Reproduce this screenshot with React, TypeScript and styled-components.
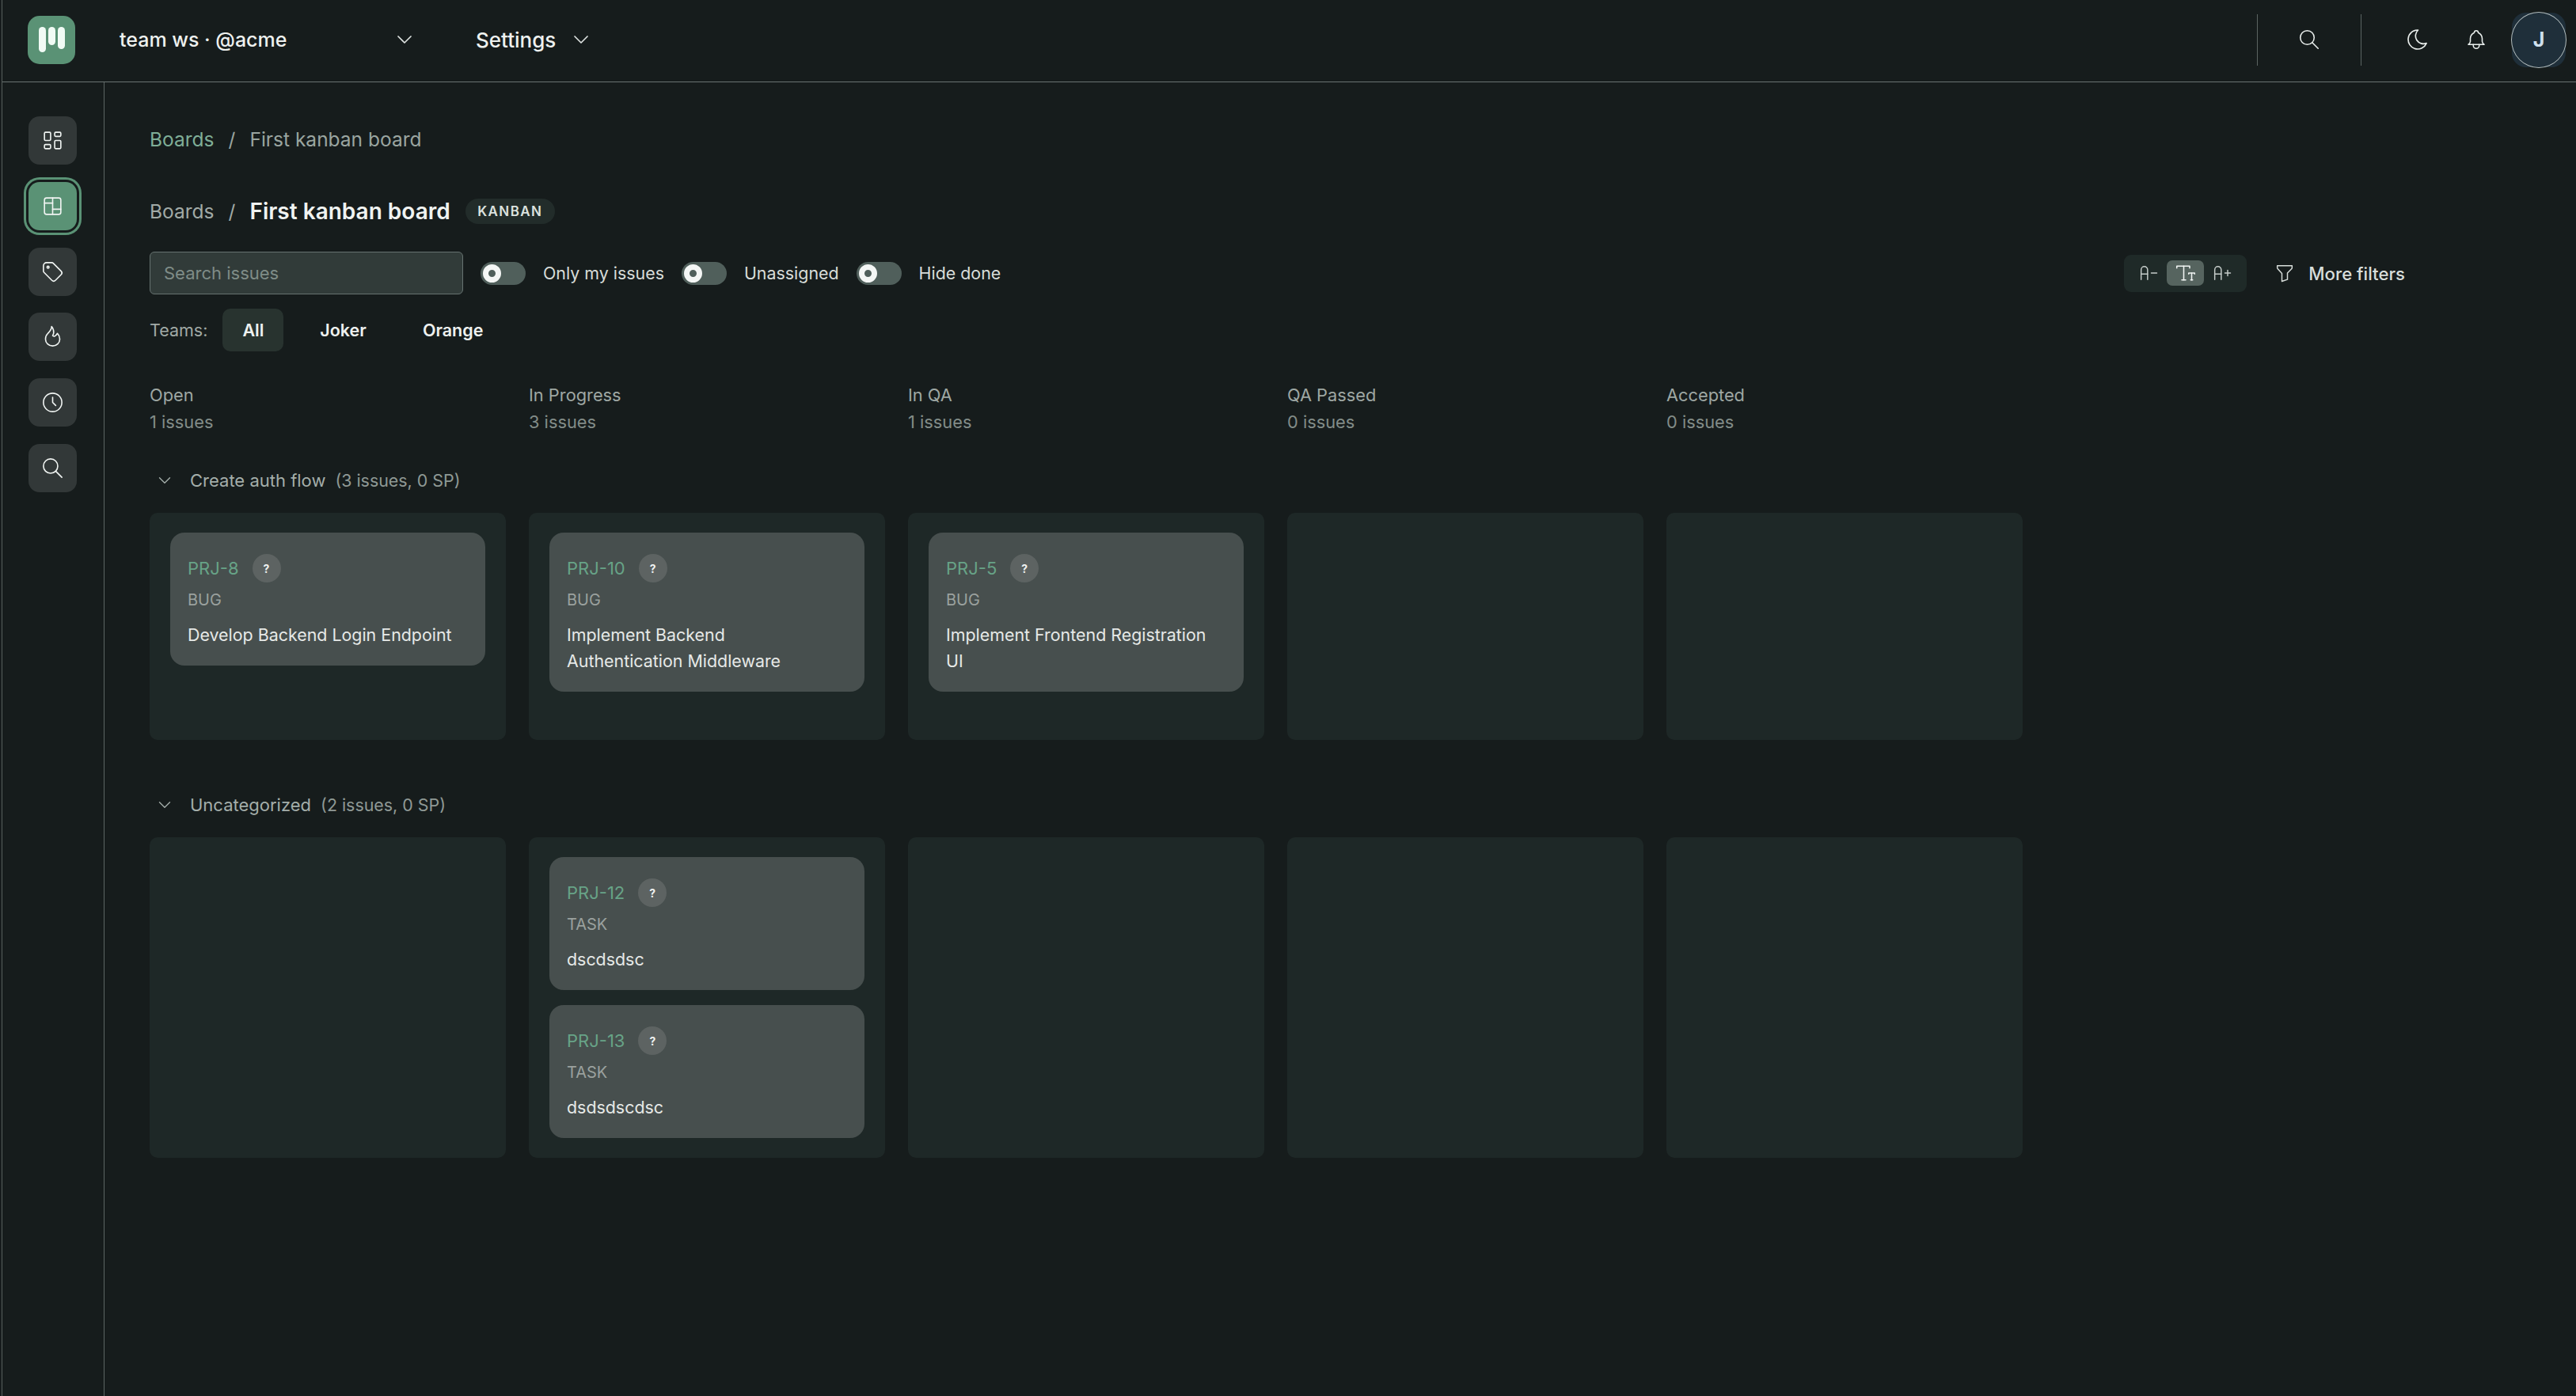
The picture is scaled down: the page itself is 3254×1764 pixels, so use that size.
import styled, { createGlobalStyle } from "styled-components";
import {
    TbBell,
    TbChevronDown,
    TbClock,
    TbFilter,
    TbFlame,
    TbLayoutBoard,
    TbLayoutDashboard,
    TbMoon,
    TbSearch,
    TbTag,
    TbTextDecrease,
    TbTextIncrease,
    TbTextSize,
} from "react-icons/tb";

const GlobalStyle = createGlobalStyle`
    html, body {
        margin: 0;
        padding: 0;
        background: #161c1c;
    }

    * {
        box-sizing: border-box;
    }

    body {
        font-family: Inter, "Noto Sans", sans-serif;
    }
`;

const Shell = styled.div`
    width: 3252px;
    height: 1764px;
    overflow: hidden;
    background: #161c1c;
    border-left: 1px solid #565e5c;
    margin-left: 2px;
    display: flex;
    flex-direction: column;
`;

const Header = styled.header`
    height: 104px;
    flex: none;
    display: flex;
    align-items: center;
    border-bottom: 1px solid #6a7472;
    padding-left: 32px;
    padding-bottom: 3px;
`;

const Logo = styled.div`
    width: 60px;
    height: 61px;
    border-radius: 15px;
    background: #5a9275;
    flex: none;
    display: flex;
    justify-content: center;
    align-items: flex-start;
    gap: 3px;
    padding-top: 14px;
`;

const LogoBar = styled.span<{ $h: number }>`
    width: 9px;
    height: ${({ $h }) => $h}px;
    border-radius: 5px;
    background: #f1fbf5;
`;

const NavSelect = styled.div<{ $width: number; $left: number; $size: number }>`
    width: ${({ $width }) => $width}px;
    margin-left: ${({ $left }) => $left}px;
    display: flex;
    align-items: center;
    justify-content: space-between;
    color: #eef1ef;
    font-size: ${({ $size }) => $size}px;
    font-weight: 500;

    svg {
        color: #dfe4e2;
    }
`;

const HeaderRight = styled.div`
    margin-left: auto;
    display: flex;
    align-items: center;
    height: 65px;
    margin-right: 13px;
    color: #e9eeec;
`;

const Divider = styled.div`
    width: 1px;
    height: 65px;
    background: #5b6462;
`;

const HeaderIcon = styled.div<{ $width: number; $left?: number }>`
    width: ${({ $width }) => $width}px;
    margin-left: ${({ $left }) => $left || 0}px;
    display: flex;
    justify-content: center;
    align-items: center;
`;

const Avatar = styled.div`
    position: relative;
    width: 68px;
    height: 69px;
    margin-left: 26px;
    border-radius: 18px;
    background: #1f2f3a;
    color: #cfe0ee;
    font-size: 25px;
    font-weight: 700;
    display: flex;
    justify-content: center;
    align-items: center;

    &::after {
        content: "";
        position: absolute;
        inset: -1px;
        border: 1.5px solid #b3bdbd;
        border-radius: 50%;
    }
`;

const Body = styled.div`
    flex: 1;
    display: flex;
    min-height: 0;
`;

const Sidebar = styled.nav`
    width: 129px;
    flex: none;
    border-right: 1px solid #5c6563;
    padding: 43px 0 0 33px;
    display: flex;
    flex-direction: column;
    gap: 21.8px;
`;

const SideButton = styled.div<{ $active?: boolean }>`
    width: 61px;
    height: 61px;
    border-radius: 14px;
    background: ${({ $active }) => ($active ? "#5a9275" : "#323838")};
    color: #f0f4f2;
    display: flex;
    align-items: center;
    justify-content: center;
    box-shadow: ${({ $active }) => ($active ? "0 0 0 3px #161c1c, 0 0 0 6px #5a9275" : "none")};
`;

const Content = styled.main`
    flex: 1;
    padding: 56px 216px 0 57px;
    min-width: 0;
`;

const Crumbs = styled.div`
    height: 32px;
    display: flex;
    align-items: center;
    font-size: 24.5px;
    color: #9aa5a0;
`;

const CrumbLink = styled.span`
    color: #7fae97;
`;

const Slash = styled.span`
    width: 45px;
    text-align: center;
`;

const TitleRow = styled.div`
    height: 34px;
    margin-top: 58px;
    display: flex;
    align-items: center;
    font-size: 24.5px;
    color: #a1aaa6;
`;

const Title = styled.h1`
    margin: 0;
    font-size: 28px;
    font-weight: 600;
    color: #f0f3f1;
`;

const Badge = styled.span`
    margin-left: 19px;
    height: 32px;
    padding: 0 15.5px;
    display: flex;
    align-items: center;
    border-radius: 16px;
    background: #222c2a;
    color: #dce2df;
    font-size: 17px;
    font-weight: 600;
    letter-spacing: 1.4px;
`;

const Toolbar = styled.div`
    margin-top: 34px;
    display: flex;
    align-items: center;
    justify-content: space-between;
`;

const ToolGroup = styled.div`
    display: flex;
    align-items: center;
`;

const SearchInput = styled.input`
    width: 396px;
    height: 54px;
    padding: 0 17px;
    border: 1.5px solid #667270;
    border-radius: 6px;
    background: #313b39;
    color: #e0e4e2;
    font: 400 22px Inter, sans-serif;
    outline: none;

    &::placeholder {
        color: #7f8c87;
    }
`;

const SwitchTrack = styled.div`
    width: 57px;
    height: 29px;
    border-radius: 15px;
    background: #505f5b;
    margin-left: 22px;
    display: flex;
    align-items: center;
    padding-left: 3px;
`;

const SwitchKnob = styled.div`
    width: 23px;
    height: 23px;
    border-radius: 50%;
    border: 7px solid #f4f6f5;
    background: #505f5b;
`;

const SwitchLabel = styled.span`
    margin-left: 22px;
    font-size: 21.4px;
    color: #d8dcd9;
`;

const FontSizes = styled.div`
    width: 155px;
    height: 47px;
    border-radius: 9px;
    background: #1f2a28;
    display: flex;
    align-items: center;
    justify-content: space-between;
    padding: 0 17px;
    color: #c6cdca;
`;

const FontSizeActive = styled.div`
    width: 47px;
    height: 32px;
    border-radius: 7px;
    background: #56645f;
    color: #f0f4f2;
    display: flex;
    align-items: center;
    justify-content: center;
`;

const FiltersButton = styled.div`
    margin-left: 34px;
    display: flex;
    align-items: center;
    gap: 16px;
    color: #d8dedb;
    font-size: 22.2px;
    font-weight: 500;
`;

const TeamsRow = styled.div`
    margin-top: 18px;
    height: 54px;
    display: flex;
    align-items: center;
    font-size: 21.5px;
    color: #a1aaa6;
`;

const TeamTab = styled.div<{ $active?: boolean }>`
    height: 54px;
    padding: 0 25px;
    margin-left: ${({ $active }) => ($active ? "19px" : "21px")};
    display: flex;
    align-items: center;
    border-radius: 10px;
    background: ${({ $active }) => ($active ? "#28332f" : "transparent")};
    color: #eef1ef;
    font-weight: 600;
`;

const BoardGrid = styled.div`
    display: grid;
    grid-template-columns: repeat(5, 450px);
    column-gap: 29px;
`;

const Heads = styled(BoardGrid)`
    margin-top: 38px;
`;

const HeadName = styled.div`
    height: 34px;
    line-height: 34px;
    font-size: 21.8px;
    color: #9ea7a3;
`;

const HeadCount = styled(HeadName)`
    color: #828c88;
`;

const GroupHead = styled.div<{ $top: number }>`
    margin-top: ${({ $top }) => $top}px;
    height: 34px;
    display: flex;
    align-items: center;
    padding-left: 6px;
    font-size: 22px;
    color: #a4aeaa;

    svg {
        margin-right: 19px;
    }
`;

const GroupMeta = styled.span`
    margin-left: 12px;
    font-size: 21.4px;
    color: #8f9995;
`;

const Lane = styled.div<{ $height: number }>`
    height: ${({ $height }) => $height}px;
    border-radius: 10px;
    background: #1e2827;
    padding: 25px 26px;
    display: flex;
    flex-direction: column;
    gap: 19px;
`;

const Lanes = styled(BoardGrid)`
    margin-top: 24px;
`;

const Card = styled.article`
    border-radius: 18px;
    background: #474f4e;
    padding: 27px 36px 22px 22px;
`;

const CardTop = styled.div`
    display: flex;
    align-items: center;
    gap: 17px;
    height: 36px;
`;

const CardKey = styled.span`
    font-size: 22px;
    color: #67a387;
`;

const Unknown = styled.span`
    width: 36px;
    height: 36px;
    border-radius: 50%;
    background: #5d6362;
    color: #f0f2f1;
    font-size: 14px;
    font-weight: 700;
    display: flex;
    align-items: center;
    justify-content: center;
`;

const CardType = styled.div`
    margin-top: 8px;
    font-size: 20px;
    line-height: 28px;
    color: #9aa19e;
`;

const CardTitle = styled.div`
    margin-top: 14px;
    font-size: 21.4px;
    line-height: 33px;
    color: #e6e9e7;
`;

const columns = [
    { name: "Open", count: 1 },
    { name: "In Progress", count: 3 },
    { name: "In QA", count: 1 },
    { name: "QA Passed", count: 0 },
    { name: "Accepted", count: 0 },
];

type Issue = { id: string; type: string; title: string };

const groups: { name: string; meta: string; top: number; height: number; lanes: Issue[][] }[] = [
    {
        name: "Create auth flow",
        meta: "(3 issues, 0 SP)",
        top: 40,
        height: 287,
        lanes: [
            [{ id: "PRJ-8", type: "BUG", title: "Develop Backend Login Endpoint" }],
            [{ id: "PRJ-10", type: "BUG", title: "Implement Backend Authentication Middleware" }],
            [{ id: "PRJ-5", type: "BUG", title: "Implement Frontend Registration UI" }],
            [],
            [],
        ],
    },
    {
        name: "Uncategorized",
        meta: "(2 issues, 0 SP)",
        top: 65,
        height: 405,
        lanes: [
            [],
            [
                { id: "PRJ-12", type: "TASK", title: "dscdsdsc" },
                { id: "PRJ-13", type: "TASK", title: "dsdsdscdsc" },
            ],
            [],
            [],
            [],
        ],
    },
];

const sideIcons = [TbLayoutDashboard, TbLayoutBoard, TbTag, TbFlame, TbClock, TbSearch];

const App = () => {
    return (
        <Shell>
            <GlobalStyle />
            <Header>
                <Logo>
                    <LogoBar $h={32} />
                    <LogoBar $h={23} />
                    <LogoBar $h={28} />
                </Logo>
                <NavSelect $width={376} $left={56} $size={25}>
                    team ws · @acme
                    <TbChevronDown size={32} strokeWidth={1.25} />
                </NavSelect>
                <NavSelect $width={149} $left={74} $size={26}>
                    Settings
                    <TbChevronDown size={32} strokeWidth={1.25} />
                </NavSelect>
                <HeaderRight>
                    <Divider />
                    <HeaderIcon $width={130}>
                        <TbSearch size={30} strokeWidth={1.25} />
                    </HeaderIcon>
                    <Divider />
                    <HeaderIcon $width={38} $left={52}>
                        <TbMoon size={32} strokeWidth={1.25} />
                    </HeaderIcon>
                    <HeaderIcon $width={38} $left={36}>
                        <TbBell size={30} strokeWidth={1.25} />
                    </HeaderIcon>
                    <Avatar>J</Avatar>
                </HeaderRight>
            </Header>
            <Body>
                <Sidebar>
                    {sideIcons.map((Icon, i) => (
                        <SideButton key={i} $active={i === 1}>
                            <Icon size={31} strokeWidth={1.25} />
                        </SideButton>
                    ))}
                </Sidebar>
                <Content>
                    <Crumbs>
                        <CrumbLink>Boards</CrumbLink>
                        <Slash>/</Slash>
                        First kanban board
                    </Crumbs>
                    <TitleRow>
                        Boards
                        <Slash>/</Slash>
                        <Title>First kanban board</Title>
                        <Badge>KANBAN</Badge>
                    </TitleRow>
                    <Toolbar>
                        <ToolGroup>
                            <SearchInput placeholder="Search issues" />
                            {["Only my issues", "Unassigned", "Hide done"].map((label) => (
                                <ToolGroup key={label}>
                                    <SwitchTrack>
                                        <SwitchKnob />
                                    </SwitchTrack>
                                    <SwitchLabel>{label}</SwitchLabel>
                                </ToolGroup>
                            ))}
                        </ToolGroup>
                        <ToolGroup>
                            <FontSizes>
                                <TbTextDecrease size={28} strokeWidth={1.25} />
                                <FontSizeActive>
                                    <TbTextSize size={30} strokeWidth={1.25} />
                                </FontSizeActive>
                                <TbTextIncrease size={28} strokeWidth={1.25} />
                            </FontSizes>
                            <FiltersButton>
                                <TbFilter size={28} strokeWidth={1.25} />
                                More filters
                            </FiltersButton>
                        </ToolGroup>
                    </Toolbar>
                    <TeamsRow>
                        Teams:
                        <TeamTab $active>All</TeamTab>
                        <TeamTab>Joker</TeamTab>
                        <TeamTab>Orange</TeamTab>
                    </TeamsRow>
                    <Heads>
                        {columns.map((col) => (
                            <div key={col.name}>
                                <HeadName>{col.name}</HeadName>
                                <HeadCount>{col.count} issues</HeadCount>
                            </div>
                        ))}
                    </Heads>
                    {groups.map((group) => (
                        <section key={group.name}>
                            <GroupHead $top={group.top}>
                                <TbChevronDown size={26} strokeWidth={1.25} />
                                {group.name}
                                <GroupMeta>{group.meta}</GroupMeta>
                            </GroupHead>
                            <Lanes>
                                {group.lanes.map((lane, i) => (
                                    <Lane key={i} $height={group.height}>
                                        {lane.map((issue) => (
                                            <Card key={issue.id}>
                                                <CardTop>
                                                    <CardKey>{issue.id}</CardKey>
                                                    <Unknown>?</Unknown>
                                                </CardTop>
                                                <CardType>{issue.type}</CardType>
                                                <CardTitle>{issue.title}</CardTitle>
                                            </Card>
                                        ))}
                                    </Lane>
                                ))}
                            </Lanes>
                        </section>
                    ))}
                </Content>
            </Body>
        </Shell>
    );
};

export default App;
